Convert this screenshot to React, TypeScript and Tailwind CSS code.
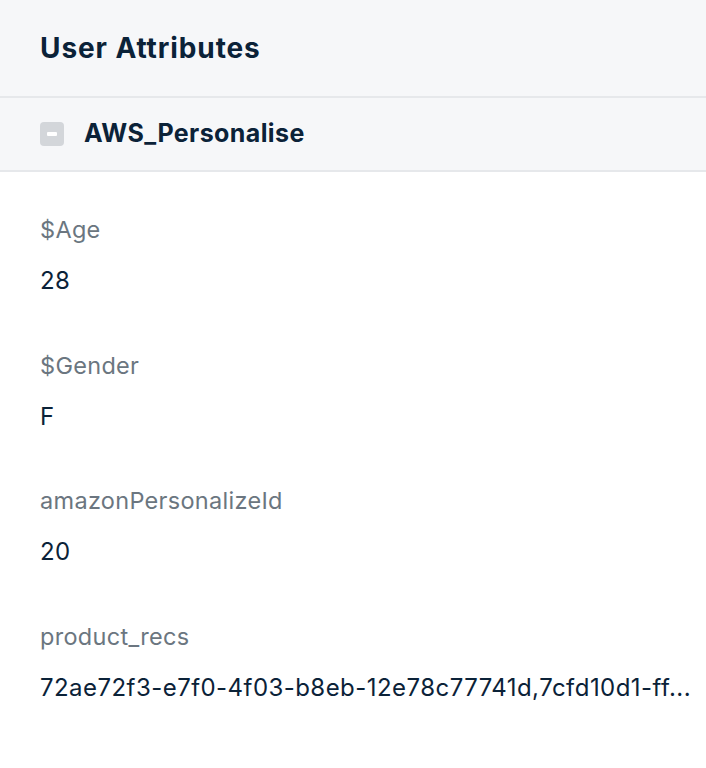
import React from "react";

const attributes = [
  { label: "$Age", value: "28" },
  { label: "$Gender", value: "F" },
  { label: "amazonPersonalizeId", value: "20" },
  {
    label: "product_recs",
    value: "72ae72f3-e7f0-4f03-b8eb-12e78c77741d,7cfd10d1-ff...",
  },
];

function MinusBox() {
  return (
    <span className="flex h-6 w-6 shrink-0 items-center justify-center rounded-[4px] bg-[#d3d6da]">
      <span className="h-[4px] w-[10px] rounded-[1px] bg-white" />
    </span>
  );
}

export default function App() {
  return (
    <div
      className="min-h-screen w-[706px] bg-white text-[#0b2238]"
      style={{ fontFamily: "Inter, 'Noto Sans', sans-serif" }}
    >
      <div className="flex h-[98px] items-center border-b-2 border-[#e6e8eb] bg-[#f6f7f9] px-10">
        <h2 className="text-[28px] font-bold tracking-[0.9px]">User Attributes</h2>
      </div>

      <div className="flex h-[74px] items-center gap-5 border-b-2 border-[#e6e8eb] bg-[#f6f7f9] px-10">
        <MinusBox />
        <span className="text-[25px] font-bold tracking-[0.4px]">AWS_Personalise</span>
      </div>

      {/* attribute list */}
      <div className="flex flex-col gap-[54.5px] pl-10 pt-[43px]">
        {attributes.map((attr) => (
          <div key={attr.label} className="flex flex-col gap-[21px]">
            <span className="text-[23.5px] leading-[30px] tracking-[0.3px] text-[#6b7680]">
              {attr.label}
            </span>
            <span className="whitespace-nowrap text-[24px] leading-[30px] tracking-[0.45px]">
              {attr.value}
            </span>
          </div>
        ))}
      </div>
    </div>
  );
}
